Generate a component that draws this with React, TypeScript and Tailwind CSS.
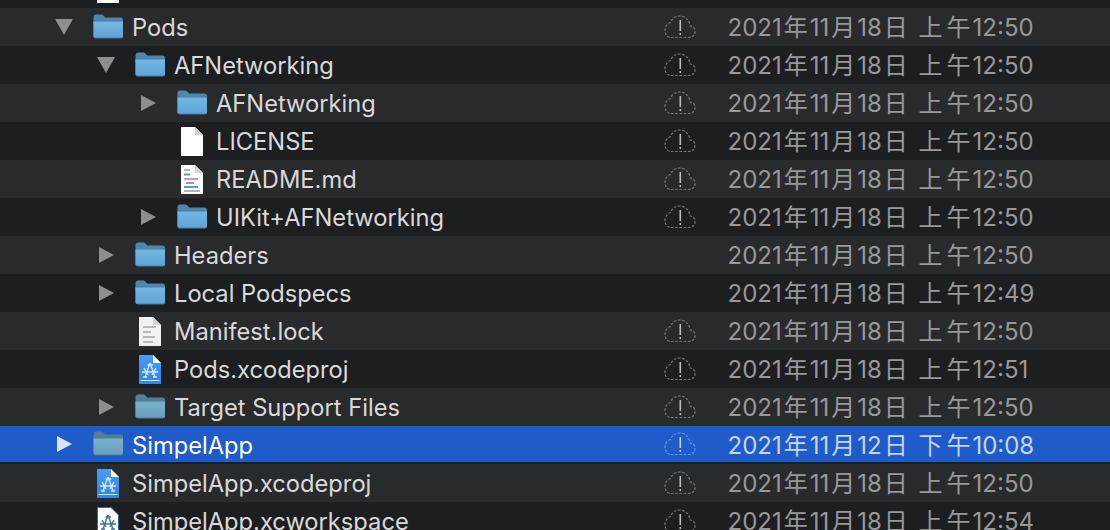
const F = "font-['Inter','Noto_Sans_CJK_SC',sans-serif]";

function Folder({ dim }: { dim?: boolean }) {
  const id = dim ? "fd" : "fn";
  return (
    <svg width="30" height="25" viewBox="0 0 30 25">
      <defs>
        <linearGradient id={id} x1="0" y1="0" x2="0" y2="1">
          <stop offset="0" stopColor={dim ? "#78b0cc" : "#74b7e2"} />
          <stop offset="1" stopColor={dim ? "#6a9fba" : "#5ea6d6"} />
        </linearGradient>
      </defs>
      <path d="M0.5 3.5 Q0.5 0.5 3 0.5 H8.5 Q10 0.5 11 2 L12 3.5 H27.5 Q30 3.5 30 6 V10 H0.5 Z" fill={dim ? "#557f97" : "#4f87ab"} />
      <path d="M0.5 6.5 H30 V22.5 Q30 24.5 28 24.5 H2.5 Q0.5 24.5 0.5 22.5 Z" fill={dim ? "#4f7a92" : "#4a7fa3"} />
      <path d="M0.5 7.5 H30 V22 Q30 23.5 28 23.5 H2.5 Q0.5 23.5 0.5 22 Z" fill={`url(#${id})`} />
    </svg>
  );
}

function Doc({ children, fill = "#ffffff" }: { children?: React.ReactNode; fill?: string }) {
  return (
    <svg width="22" height="29" viewBox="0 0 22 29">
      <path d="M0 0 H14 L22 8 V29 H0 Z" fill={fill} />
      <path d="M14 0 L22 8 H14 Z" fill="#d4d4d6" />
      {children}
    </svg>
  );
}

function Readme() {
  return (
    <Doc>
      <rect x="3" y="4" width="6" height="2" fill="#b5b5b8" />
      <rect x="3" y="8.5" width="6" height="2" fill="#5ea3a8" />
      <rect x="3" y="13" width="14" height="2" fill="#cf9ea0" />
      <rect x="5" y="17" width="8" height="2" fill="#a887e8" />
      <rect x="3" y="21" width="14" height="2" fill="#5ea3a8" />
      <rect x="3" y="25" width="16" height="2" fill="#b5b5b8" />
    </Doc>
  );
}

function Lines() {
  return (
    <Doc fill="#f2f2f2">
      <rect x="4" y="9" width="13" height="2" fill="#b9b9b9" />
      <rect x="4" y="14" width="8" height="2" fill="#b9b9b9" />
      <rect x="4" y="19" width="12" height="2" fill="#b9b9b9" />
      <rect x="4" y="24" width="10" height="2" fill="#b9b9b9" />
    </Doc>
  );
}

function Proj({ work }: { work?: boolean }) {
  const stroke = work ? "#3f6fa8" : "#d5e8fb";
  return (
    <svg width="22" height="29" viewBox="0 0 22 29">
      <defs>
        <linearGradient id="pj" x1="0" y1="0" x2="0" y2="1">
          <stop offset="0" stopColor="#4a9bf0" />
          <stop offset="1" stopColor="#2f86ec" />
        </linearGradient>
      </defs>
      {work ? (
        <path d="M0.5 0.5 H14 L21.5 8 V28.5 H0.5 Z" fill="#ffffff" stroke="#3a6ea8" />
      ) : (
        <>
          <path d="M0 0 H14 L22 8 V29 H0 Z" fill="url(#pj)" />
          <rect x="1.5" y="25" width="19" height="1" fill="#d5e8fb" />
          <path d="M14 0 L22 8 H14 Z" fill="#ffffff" />
        </>
      )}
      <path
        d="M11 8 L6 22 M11 8 L16 22 M8.5 10 L14 10 M3 17 H19 M5 13 L9 20 M17 13 L13 20 M4 22 H8 M14 22 H18"
        stroke={stroke}
        strokeWidth="1.4"
        fill="none"
      />
    </svg>
  );
}

function Cloud({ selected }: { selected?: boolean }) {
  const c = selected ? "#6f98e0" : "#767779";
  return (
    <svg width="32" height="24" viewBox="0 0 32 24">
      <path
        d="M7 22.5 H25 C29 22.5 31 19.5 31 16.5 C31 13 28.5 11 26 11 C25.5 5 21 1 15.5 1 C11 1 8 3.5 6.5 7.5 C3.5 8.5 1 11.5 1 15.5 C1 19.5 3.5 22.5 7 22.5 Z"
        fill="none"
        stroke={c}
        strokeWidth="1.2"
        strokeDasharray="2.6 1.6"
      />
      <rect x="15.5" y="5" width="1.6" height="11" fill={selected ? "#c4d5f4" : "#bdbdbe"} />
      <rect x="15.5" y="18" width="1.6" height="2" fill={selected ? "#c4d5f4" : "#bdbdbe"} />
    </svg>
  );
}

function DateText({ value }: { value: string }) {
  const parts = value.match(/[\u4e00-\u9fff]|[^\u4e00-\u9fff]+/g) ?? [];
  return (
    <>
      {parts.map((p, i) =>
        /[\u4e00-\u9fff]/.test(p) ? (
          <span key={i} className="mx-[2px]">
            {p}
          </span>
        ) : (
          <span key={i}>{p}</span>
        )
      )}
    </>
  );
}

type Row = {
  name: string;
  depth: 1 | 2 | 3;
  arrow?: "open" | "closed";
  icon: "folder" | "blank" | "readme" | "lines" | "proj" | "work";
  date?: string;
  noCloud?: boolean;
  dark: boolean;
  selected?: boolean;
};

const D = "2021年11月18日 上午12:50";

const rows: Row[] = [
  { name: "Pods", depth: 1, arrow: "open", icon: "folder", dark: false },
  { name: "AFNetworking", depth: 2, arrow: "open", icon: "folder", dark: true },
  { name: "AFNetworking", depth: 3, arrow: "closed", icon: "folder", dark: false },
  { name: "LICENSE", depth: 3, icon: "blank", dark: true },
  { name: "README.md", depth: 3, icon: "readme", dark: false },
  { name: "UIKit+AFNetworking", depth: 3, arrow: "closed", icon: "folder", dark: true },
  { name: "Headers", depth: 2, arrow: "closed", icon: "folder", dark: false, noCloud: true },
  { name: "Local Podspecs", depth: 2, arrow: "closed", icon: "folder", dark: true, noCloud: true, date: "2021年11月18日 上午12:49" },
  { name: "Manifest.lock", depth: 2, icon: "lines", dark: false },
  { name: "Pods.xcodeproj", depth: 2, icon: "proj", dark: true, date: "2021年11月18日 上午12:51" },
  { name: "Target Support Files", depth: 2, arrow: "closed", icon: "folder", dark: false },
  { name: "SimpelApp", depth: 1, arrow: "closed", icon: "folder", dark: true, selected: true, date: "2021年11月12日 下午10:08" },
  { name: "SimpelApp.xcodeproj", depth: 1, icon: "proj", dark: false },
  { name: "SimpelApp.xcworkspace", depth: 1, icon: "work", dark: true, date: "2021年11月18日 上午12:54" },
];

const indent = { 1: "pl-[50px]", 2: "pl-[92px]", 3: "pl-[134px]" };

function FileRow({ r }: { r: Row }) {
  const bg = r.selected ? "bg-[#1f5bc9] h-[36px] mb-[2px]" : r.dark ? "bg-[#1d1e20] h-[38px]" : "bg-[#292a2c] h-[38px]";
  return (
    <div className={`${bg} flex items-center shrink-0`}>
      <div className={`${indent[r.depth]} flex items-center flex-1 min-w-0`}>
        <div className="w-[43px] shrink-0 flex items-center">
          {r.arrow === "open" && (
            <svg width="28" height="18" viewBox="0 0 28 18">
              <path d="M5 1 H23 L14 17 Z" fill="#8e8e8f" />
            </svg>
          )}
          {r.arrow === "closed" && (
            <svg width="28" height="18" viewBox="0 0 28 18">
              <path d="M7 1 L22 9 L7 17 Z" fill={r.selected ? "#dbe4f7" : "#8e8e8f"} />
            </svg>
          )}
        </div>
        <div className="w-[39px] shrink-0 flex">
          <div className="w-[30px] flex justify-center">
            {r.icon === "folder" && <Folder dim={r.selected || r.name === "Target Support Files"} />}
            {r.icon === "blank" && <Doc />}
            {r.icon === "readme" && <Readme />}
            {r.icon === "lines" && <Lines />}
            {r.icon === "proj" && <Proj />}
            {r.icon === "work" && <Proj work />}
          </div>
        </div>
        <span className={`text-[23.7px] leading-none whitespace-nowrap ${r.selected ? "text-white mt-[4px]" : "text-[#d9d9d9] mt-[2px]"}`}>{r.name}</span>
      </div>
      <div className="w-[446px] shrink-0 flex items-center">
        <div className="w-[65px] shrink-0 flex">{!r.noCloud && <Cloud selected={r.selected} />}</div>
        <span className={`text-[24px] leading-none -ml-[1.5px] whitespace-nowrap ${r.selected ? "text-[#c4d5f4] mt-[4px]" : "text-[#989899] mt-[2px]"}`}>
          <DateText value={r.date ?? D} />
        </span>
      </div>
    </div>
  );
}

export default function App() {
  return (
    <div className={`${F} w-[1110px] h-[530px] overflow-hidden bg-[#1d1e20] flex flex-col`}>
      <div className="h-[8px] shrink-0 flex pl-[97px] items-start">
        <div className="w-[22px] h-[3px] bg-white" />
      </div>
      {rows.map((r, i) => (
        <FileRow key={i} r={r} />
      ))}
    </div>
  );
}
